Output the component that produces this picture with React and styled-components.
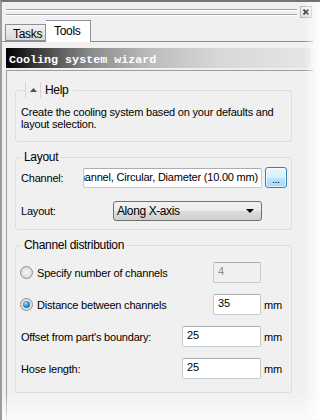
import React from 'react';
import styled, { createGlobalStyle } from 'styled-components';

const GlobalStyle = createGlobalStyle`
  html, body {
    margin: 0;
    padding: 0;
    background: #ffffff;
  }
`;

const Frame = styled.div`
  position: relative;
  width: 320px;
  height: 420px;
  overflow: hidden;
  box-sizing: border-box;
  display: flex;
  flex-direction: column;
  background: #f0f0f0;
  border-left: 2px solid #9c9c9c;
  border-top: 2px solid #747474;
  font-family: "Liberation Sans", Arial, sans-serif;
  font-size: 11px;
  letter-spacing: -0.2px;
  color: #000;
  &::before {
    content: "";
    position: absolute;
    top: -2px;
    right: 0;
    width: 16px;
    height: 100%;
    background: linear-gradient(to right, rgba(255, 255, 255, 0), rgba(255, 255, 255, 0.95));
    pointer-events: none;
  }
  &::after {
    content: "";
    position: absolute;
    left: 0;
    bottom: 0;
    width: 100%;
    height: 28px;
    background: linear-gradient(to bottom, rgba(255, 255, 255, 0), rgba(255, 255, 255, 0.75));
    pointer-events: none;
  }
`;

const TitleBar = styled.div`
  height: 18px;
  display: flex;
  align-items: center;
  gap: 3px;
  padding: 0 8px 0 4px;
`;

const Grip = styled.div`
  flex: 1;
  height: 4px;
  margin-top: 2px;
  border-top: 1px solid #a4a4a4;
  border-bottom: 1px solid #a4a4a4;
  box-shadow: 0 1px 0 #ffffff, inset 0 1px 0 #ffffff;
`;

const CloseBtn = styled.div`
  width: 10px;
  height: 10px;
  margin-top: 1px;
  border: 1px solid #b8b8b8;
  background: linear-gradient(#f4f4f4, #dedede);
  display: flex;
  align-items: center;
  justify-content: center;
`;

const TabStrip = styled.div`
  height: 22px;
  box-sizing: border-box;
  display: flex;
  align-items: flex-end;
  padding-left: 3px;
  margin-right: 7px;
  border-bottom: 1px solid #8e8f94;
`;

const Tab = styled.div`
  box-sizing: border-box;
  height: ${p => (p.$active ? 22 : 17)}px;
  width: ${p => p.$width}px;
  margin-bottom: ${p => (p.$active ? -1 : 0)}px;
  padding-left: ${p => (p.$active ? 8 : 7)}px;
  padding-top: ${p => (p.$active ? 3 : 2)}px;
  border: 1px solid #8e8f94;
  border-bottom: ${p => (p.$active ? 'none' : '1px solid #8e8f94')};
  border-left: ${p => (p.$active ? 'none' : '1px solid #8e8f94')};
  background: ${p => (p.$active ? '#ffffff' : 'linear-gradient(#f3f3f3, #d9d9d9)')};
  font-size: 12px;
  letter-spacing: -0.3px;
  line-height: 14px;
`;

const WizardBar = styled.div`
  height: 20px;
  box-sizing: border-box;
  margin: 6px 9px 0 4px;
  padding: 3px 0 0 3px;
  display: flex;
  align-items: center;
  background: linear-gradient(to right, #000000 0%, #3a3a3a 10%, #8c8c8c 28%, #bdbdbd 48%, #d8d8d8 70%, #e6e6e6 100%);
  color: #ffffff;
  font-family: "Liberation Mono", "Courier New", monospace;
  font-weight: bold;
  font-size: 11.7px;
  letter-spacing: 0;
`;

const ContentBox = styled.div`
  flex: 1;
  margin: 2px 7px 0 4px;
  padding: 11px 0 0 8px;
  border-top: 1px solid #9d9d9d;
  border-left: 1px solid #9d9d9d;
  display: flex;
  flex-direction: column;
  gap: 8px;
`;

const Group = styled.fieldset`
  width: 277px;
  box-sizing: border-box;
  margin: 0;
  padding: 0 0 ${p => p.$bottom}px 5px;
  border: 1px solid #d5dfe5;
  border-radius: 3px;
  min-inline-size: 0;
`;

const Legend = styled.legend`
  padding: 0 3px;
  line-height: 14px;
  font-size: 12px;
  letter-spacing: -0.3px;
`;

const HelpLegend = styled.legend`
  padding: 0;
  margin-left: 4px;
`;

const HelpToggle = styled.div`
  height: 16px;
  display: flex;
  align-items: center;
  border-left: 1px solid #d6d6d6;
  font-size: 12px;
  letter-spacing: -0.3px;
`;

const ArrowCell = styled.div`
  width: 14px;
  height: 100%;
  border-right: 1px solid #d6d6d6;
  display: flex;
  align-items: center;
  justify-content: center;
`;

const HelpTitle = styled.span`
  padding: 0 5px 0 4px;
`;

const HelpText = styled.p`
  margin: 8px 0 0;
  line-height: 12px;
`;

const Rows = styled.div`
  display: flex;
  flex-direction: column;
  gap: ${p => p.$gap}px;
  margin-top: ${p => p.$top}px;
`;

const Row = styled.div`
  display: flex;
  align-items: center;
  height: ${p => p.$h || 21}px;
`;

const Label = styled.div`
  flex: ${p => (p.$w ? 'none' : 1)};
  width: ${p => (p.$w ? `${p.$w}px` : 'auto')};
  display: flex;
  align-items: center;
  gap: 4px;
  white-space: nowrap;
`;

const TextBox = styled.div`
  box-sizing: border-box;
  width: ${p => p.$w}px;
  height: ${p => p.$h || 21}px;
  padding: 2px 4px 0;
  border: 1px solid #c6c9ce;
  border-top-color: #abadb3;
  border-radius: 2px;
  background: ${p => (p.$disabled ? '#f0f0f0' : '#ffffff')};
  color: ${p => (p.$disabled ? '#8d8d8d' : '#000')};
  line-height: 13px;
  white-space: nowrap;
  overflow: hidden;
`;

const ScrolledBox = styled(TextBox)`
  display: flex;
  justify-content: flex-end;
  align-items: center;
  padding: 0 3px 0 0;
`;

const BrowseBtn = styled.div`
  box-sizing: border-box;
  width: 22px;
  height: 21px;
  margin-left: 3px;
  border: 1px solid #3c7fb1;
  border-radius: 3px;
  background: linear-gradient(#eaf6fd 0%, #d9f0fc 50%, #bee6fd 51%, #a7d9f5 100%);
  box-shadow: inset 0 0 0 1px rgba(255, 255, 255, 0.6);
  display: flex;
  align-items: flex-end;
  justify-content: center;
  padding-bottom: 3px;
  font-size: 10px;
  line-height: 8px;
`;

const Select = styled.div`
  box-sizing: border-box;
  width: 149px;
  height: 20px;
  border: 1px solid #707070;
  border-radius: 3px;
  background: linear-gradient(#f2f2f2 0%, #ebebeb 50%, #dddddd 51%, #cfcfcf 100%);
  display: flex;
  align-items: center;
  justify-content: space-between;
  padding: 0 7px 0 3px;
  font-size: 12px;
  letter-spacing: -0.4px;
`;

const Radio = styled.span`
  box-sizing: border-box;
  width: 13px;
  height: 13px;
  margin-left: -1px;
  border-radius: 50%;
  border: 1px solid #8e8f8f;
  background: radial-gradient(circle at 50% 50%, #f6f6f6 0%, #e2e2e2 55%, #cdcdcd 100%);
  display: flex;
  align-items: center;
  justify-content: center;
  &::after {
    content: "";
    display: ${p => (p.$checked ? 'block' : 'none')};
    width: 7px;
    height: 7px;
    border-radius: 50%;
    background: radial-gradient(circle at 40% 35%, #a8e2ff 0%, #2b8fd6 45%, #0b4f8c 100%);
  }
`;

const Unit = styled.div`
  width: 27px;
  margin-left: 3px;
`;

function App() {
  return (
    <>
      <GlobalStyle />
      <Frame>
        <TitleBar>
          <Grip />
          <CloseBtn>
            <svg width="6" height="6" viewBox="0 0 6 6">
              <path d="M0.5 0.5 L5.5 5.5 M5.5 0.5 L0.5 5.5" stroke="#333" strokeWidth="1.6" />
            </svg>
          </CloseBtn>
        </TitleBar>
        <TabStrip>
          <Tab $width={41}>Tasks</Tab>
          <Tab $width={45} $active>Tools</Tab>
        </TabStrip>
        <WizardBar>Cooling system wizard</WizardBar>
        <ContentBox>
          <Group $bottom={11}>
            <HelpLegend>
              <HelpToggle>
                <ArrowCell>
                  <svg width="7" height="4" viewBox="0 0 7 4">
                    <path d="M0 4 L3.5 0 L7 4 Z" fill="#505050" />
                  </svg>
                </ArrowCell>
                <HelpTitle>Help</HelpTitle>
              </HelpToggle>
            </HelpLegend>
            <HelpText>Create the cooling system based on your defaults and layout selection.</HelpText>
          </Group>

          <Group $bottom={8}>
            <Legend>Layout</Legend>
            <Rows $top={3} $gap={13}>
              <Row>
                <Label $w={62}>Channel:</Label>
                <ScrolledBox $w={179} $h={20}>hannel, Circular, Diameter (10.00 mm)</ScrolledBox>
                <BrowseBtn>...</BrowseBtn>
              </Row>
              <Row $h={20}>
                <Label $w={92}>Layout:</Label>
                <Select>
                  <span>Along X-axis</span>
                  <svg width="8" height="4" viewBox="0 0 8 4">
                    <path d="M0 0 L8 0 L4 4 Z" fill="#000" />
                  </svg>
                </Select>
              </Row>
            </Rows>
          </Group>

          <Group $bottom={13}>
            <Legend>Channel distribution</Legend>
            <Rows $top={10} $gap={11}>
              <Row>
                <Label><Radio />Specify number of channels</Label>
                <TextBox $w={48} $disabled>4</TextBox>
                <Unit />
              </Row>
              <Row>
                <Label><Radio $checked />Distance between channels</Label>
                <TextBox $w={48}>35</TextBox>
                <Unit>mm</Unit>
              </Row>
              <Row>
                <Label>Offset from part's boundary:</Label>
                <TextBox $w={79}>25</TextBox>
                <Unit>mm</Unit>
              </Row>
              <Row>
                <Label>Hose length:</Label>
                <TextBox $w={79}>25</TextBox>
                <Unit>mm</Unit>
              </Row>
            </Rows>
          </Group>
        </ContentBox>
      </Frame>
    </>
  );
}

export default App;
